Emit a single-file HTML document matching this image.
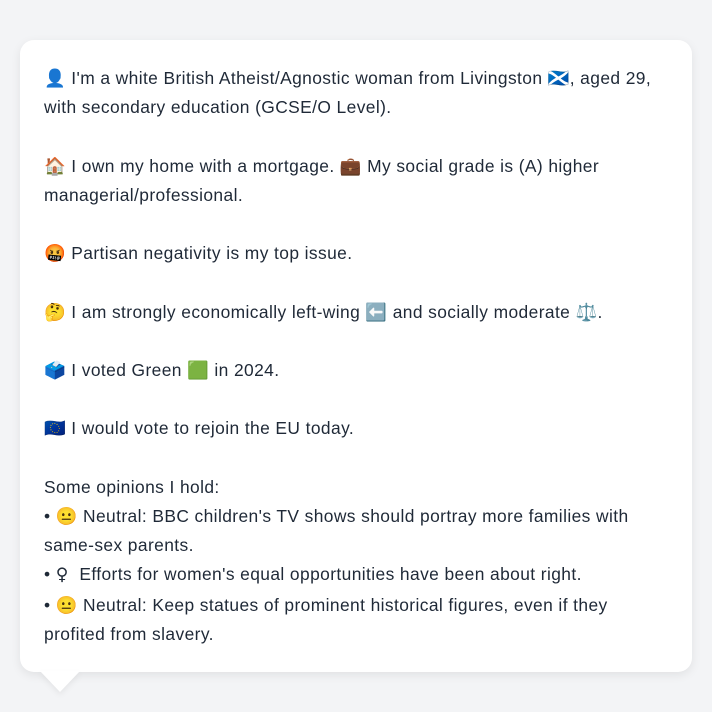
<!DOCTYPE html>
<html><head><meta charset="utf-8"><style>
html,body{margin:0;padding:0;background:#f3f4f6;width:712px;height:712px;overflow:hidden}
.card{position:absolute;left:20px;top:40px;width:672px;height:632px;background:#fff;border-radius:14px;box-shadow:0 3px 10px rgba(0,0,0,0.08)}
.tail{position:absolute;left:40px;top:671px;width:0;height:0;border-left:20px solid transparent;border-right:20px solid transparent;border-top:21px solid #fff;filter:drop-shadow(0 3px 3px rgba(0,0,0,0.06))}
.t{position:absolute;left:44px;top:64px;font-family:"Liberation Sans",sans-serif;font-size:17.4px;letter-spacing:0.4px;line-height:29.2px;color:#1f2937;white-space:nowrap}
</style></head><body>
<div class="card"></div><div class="tail"></div>
<div class="t">
👤 I'm a white British Atheist/Agnostic woman from Livingston 🏴󠁧󠁢󠁳󠁣󠁴󠁿, aged 29,<br>
with secondary education (GCSE/O Level).<br><br>
🏠 I own my home with a mortgage. 💼 My social grade is (A) higher<br>
managerial/professional.<br><br>
🤬 Partisan negativity is my top issue.<br><br>
🤔 I am strongly economically left-wing ⬅️ and socially moderate ⚖️.<br><br>
🗳️ I voted Green 🟩 in 2024.<br><br>
🇪🇺 I would vote to rejoin the EU today.<br><br>
Some opinions I hold:<br>
• 😐 Neutral: BBC children's TV shows should portray more families with<br>
same-sex parents.<br>
• <span style="font-family:'DejaVu Sans',sans-serif">♀&#xFE0E;</span>&nbsp; Efforts for women's equal opportunities have been about right.<br>
• 😐 Neutral: Keep statues of prominent historical figures, even if they<br>
profited from slavery.
</div>
</body></html>
